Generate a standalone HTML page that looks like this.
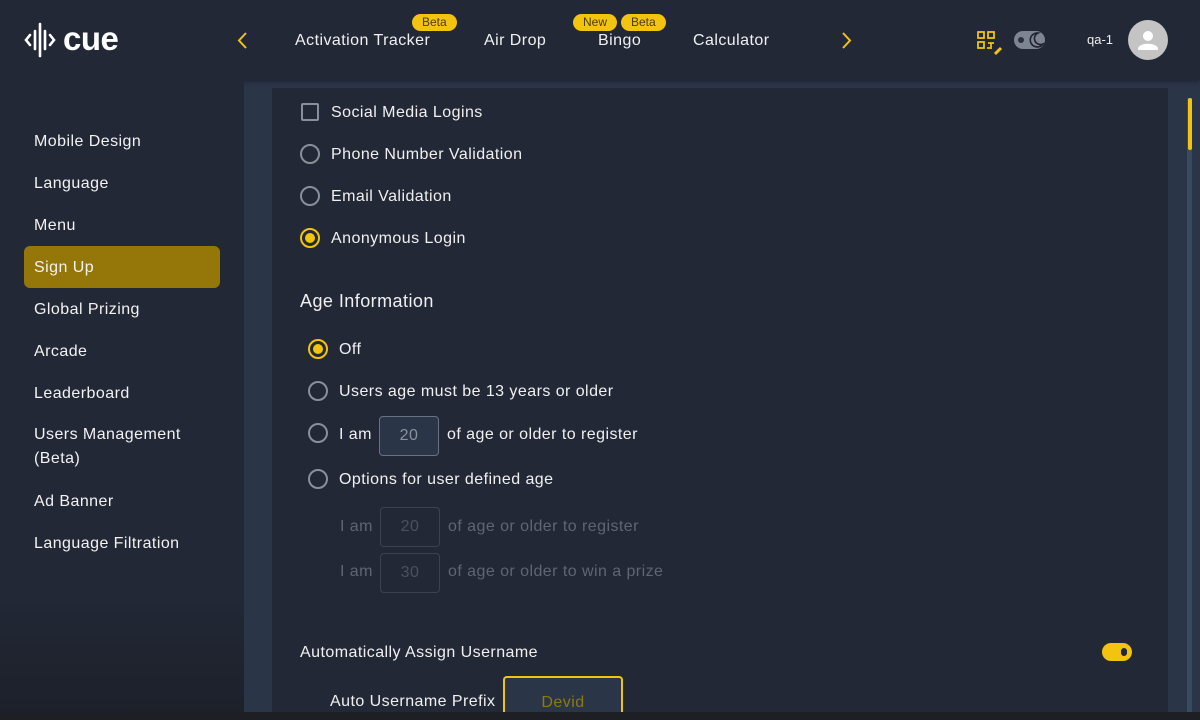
<!DOCTYPE html>
<html><head><style>
*{box-sizing:border-box;margin:0;padding:0}
html,body{width:1200px;height:720px;overflow:hidden}
body{background:#2b3548;font-family:"Liberation Sans",sans-serif;color:#fff;position:relative;letter-spacing:0.45px}
.hdr{position:absolute;left:0;top:0;width:1200px;height:80px;background:#222836;box-shadow:0 2px 4px rgba(0,0,0,.3)}
.side{position:absolute;left:0;top:80px;width:244px;height:640px;background:linear-gradient(#222836 0,#222836 80%,#1c2029 100%)}
.side div{position:absolute;left:34px;font-size:16px;color:#f2f2f2}
.active{position:absolute;left:24px;top:246px;width:196px;height:42px;background:#957709;border-radius:6px}
.panel{position:absolute;left:272px;top:88px;width:896px;height:624px;background:#222836}
.t{position:absolute;font-size:16px;color:#f0f0f0;white-space:nowrap}
.rad{position:absolute;width:20px;height:20px;border:2px solid #8a8f99;border-radius:50%}
.rad.on{border-color:#f2c40f}
.rad.on:after{content:"";position:absolute;left:3px;top:3px;width:10px;height:10px;border-radius:50%;background:#f2c40f}
.box{position:absolute;width:60px;height:40px;border:1px solid #6a7180;border-radius:4px;background:#2b3548;color:#8a919e;font-size:16px;text-align:center;line-height:38px}
.box.dis{background:#222836;border-color:#3a4252;color:#4a5160}
.dim{color:#5f6573}
.nav{position:absolute;top:32px;font-size:16px;color:#f0f0f0}
.badge{position:absolute;top:14px;height:17px;background:#f2c40f;color:#4a3d05;font-size:12px;border-radius:9px;padding:0 10px;line-height:17px;letter-spacing:0}
</style></head><body>
<div class="hdr">
<svg style="position:absolute;left:24px;top:22px" width="110" height="36" viewBox="0 0 110 36">
<g stroke="#fff" stroke-width="2.6" fill="none" stroke-linecap="round">
<path d="M6 13 L2 18 L6 23"/><path d="M11 9 V27"/><path d="M16 2 V34"/><path d="M21 9 V27"/><path d="M26 13 L30 18 L26 23"/>
</g>
<text x="39" y="28" font-family="Liberation Sans" font-weight="bold" font-size="33" fill="#fff" letter-spacing="-0.5">cue</text>
</svg>
<svg style="position:absolute;left:237px;top:32px" width="12" height="18"><path d="M9 1 L2 8.5 L9 16" stroke="#f2c40f" stroke-width="2" fill="none"/></svg>
<div class="nav" style="left:295px">Activation Tracker</div>
<div class="badge" style="left:412px">Beta</div>
<div class="nav" style="left:484px">Air Drop</div>
<div class="nav" style="left:598px">Bingo</div>
<div class="badge" style="left:573px">New</div>
<div class="badge" style="left:621px">Beta</div>
<div class="nav" style="left:693px">Calculator</div>
<svg style="position:absolute;left:840px;top:32px" width="12" height="18"><path d="M3 1 L10 8.5 L3 16" stroke="#f2c40f" stroke-width="2" fill="none"/></svg>
<svg style="position:absolute;left:976px;top:30px" width="28" height="26"><g stroke="#f2c40f" stroke-width="1.8" fill="none"><rect x="2" y="2" width="6" height="6"/><rect x="12" y="2" width="6" height="6"/><rect x="2" y="12" width="6" height="6"/><path d="M12 13 H18 M15 13 V19 M11 18 H14"/><path d="M19 24 L25 18" stroke-width="3"/></g></svg>
<div style="position:absolute;left:1014px;top:31px;width:31px;height:18px;border-radius:9px;background:#7e8592"></div>
<div style="position:absolute;left:1018px;top:37px;width:6px;height:6px;border-radius:50%;background:#2b3040"></div>
<svg style="position:absolute;left:1027px;top:31px" width="18" height="18"><path d="M11 2 A7 7 0 1 0 16 13 A6 6 0 0 1 11 2Z" stroke="#1f2430" stroke-width="1.6" fill="none"/></svg>
<div style="position:absolute;left:1087px;top:32px;font-size:13px;color:#eee;letter-spacing:0">qa-1</div>
<div style="position:absolute;left:1128px;top:20px;width:40px;height:40px;border-radius:50%;background:#c4c4c4"></div>
<svg style="position:absolute;left:1128px;top:20px" width="40" height="40"><circle cx="20" cy="16" r="5" fill="#fff"/><path d="M10 29 C10 22 30 22 30 29 V30 H10Z" fill="#fff"/></svg>
</div>
<div class="side">
<div style="top:53px">Mobile Design</div>
<div style="top:95px">Language</div>
<div style="top:137px">Menu</div>
</div>
<div class="active"></div>
<div class="side" style="background:none;top:80px">
<div style="top:179px">Sign Up</div>
<div style="top:221px">Global Prizing</div>
<div style="top:263px">Arcade</div>
<div style="top:305px">Leaderboard</div>
<div style="line-height:24px;top:343px">Users Management<br>(Beta)</div>
<div style="top:413px">Ad Banner</div>
<div style="top:455px">Language Filtration</div>
</div>
<div class="panel"></div>
<div style="position:absolute;left:1187px;top:98px;width:5px;height:614px;background:#3a4a60"></div>
<div style="position:absolute;left:1188px;top:98px;width:4px;height:52px;background:#f2c40f;border-radius:2px"></div>
<div style="position:absolute;left:301px;top:103px;width:18px;height:18px;border:2px solid #8a8f99;border-radius:2px"></div>
<div class="t" style="left:331px;top:104px">Social Media Logins</div>
<div class="rad" style="left:300px;top:144px"></div><div class="t" style="left:331px;top:146px">Phone Number Validation</div>
<div class="rad" style="left:300px;top:186px"></div><div class="t" style="left:331px;top:188px">Email Validation</div>
<div class="rad on" style="left:300px;top:228px"></div><div class="t" style="left:331px;top:230px">Anonymous Login</div>
<div class="t" style="left:300px;top:291px;font-size:18px">Age Information</div>
<div class="rad on" style="left:308px;top:339px"></div><div class="t" style="left:339px;top:341px">Off</div>
<div class="rad" style="left:308px;top:381px"></div><div class="t" style="left:339px;top:383px">Users age must be 13 years or older</div>
<div class="rad" style="left:308px;top:423px"></div><div class="t" style="left:339px;top:426px">I am</div>
<div class="box" style="left:379px;top:416px">20</div><div class="t" style="left:447px;top:426px">of age or older to register</div>
<div class="rad" style="left:308px;top:469px"></div><div class="t" style="left:339px;top:471px">Options for user defined age</div>
<div class="t dim" style="left:340px;top:518px">I am</div>
<div class="box dis" style="left:380px;top:507px">20</div><div class="t dim" style="left:448px;top:518px">of age or older to register</div>
<div class="t dim" style="left:340px;top:563px">I am</div>
<div class="box dis" style="left:380px;top:553px">30</div><div class="t dim" style="left:448px;top:563px">of age or older to win a prize</div>
<div class="t" style="left:300px;top:644px">Automatically Assign Username</div>
<div style="position:absolute;left:1102px;top:643px;width:30px;height:18px;border-radius:9px;background:#f2c40f"></div>
<div style="position:absolute;left:1121px;top:648px;width:6px;height:8px;border-radius:3px;background:#222836"></div>
<div class="t" style="left:330px;top:693px">Auto Username Prefix</div>
<div style="position:absolute;left:503px;top:676px;width:120px;height:44px;border:2px solid #f2c40f;border-bottom:none;border-radius:4px 4px 0 0;background:#2b3548;color:#8a7a10;font-size:16px;text-align:center;padding-top:16px">Devid</div>
<div style="position:absolute;left:0;top:712px;width:1200px;height:8px;background:#1d1f25"></div>
</body></html>
